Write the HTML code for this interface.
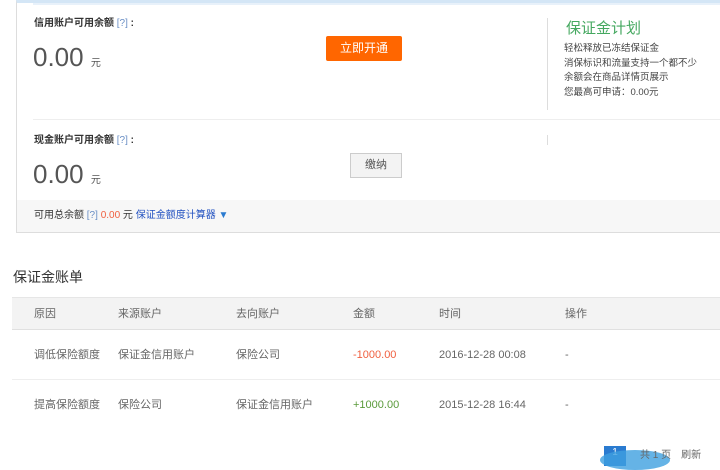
<!DOCTYPE html>
<html><head><meta charset="utf-8"><style>
*{margin:0;padding:0;box-sizing:border-box}
body{width:720px;height:460px;overflow:hidden;background:#fff;font-family:"Liberation Sans","Noto Sans CJK SC",sans-serif;color:#333;font-size:11px;position:relative}
.a{position:absolute;white-space:nowrap;line-height:14px}
.box{position:absolute;left:16px;top:0;width:720px;height:233px;border:1px solid #ddd;border-top:3px solid #d4e6f6}
.big{font-size:26px;color:#555;font-family:"Liberation Sans",sans-serif;line-height:1}
.q{color:#6a8fc5}
.g{color:#666}
</style></head><body>
<div class="box"></div>
<div class="a" style="left:33px;top:3px;width:690px;height:2px;background:#e8f1fa"></div>
<div class="a" style="left:33px;top:119px;width:690px;height:1px;background:#eee"></div>
<div class="a" style="left:17px;top:200px;width:703px;height:32px;background:#f7f7f7"></div>

<div class="a" style="left:34px;top:17px;font-weight:bold;font-size:10px">信用账户可用余额 <span class="q" style="font-weight:normal">[?]</span> :</div>
<div class="a big" style="left:33px;top:44px">0.00 <span style="font-size:10px">元</span></div>
<div class="a" style="left:326px;top:36px;width:76px;height:25px;background:#f60;color:#fff;font-size:12px;text-align:center;line-height:25px;border-radius:2px">立即开通</div>

<div class="a" style="left:547px;top:18px;width:1px;height:92px;background:#ddd"></div>
<div class="a" style="left:566px;top:20px;color:#45a860;font-size:15px;line-height:18px">保证金计划</div>
<div class="a" style="left:564px;top:42px;font-size:9.5px;line-height:14.5px;color:#444">轻松释放已冻结保证金<br>消保标识和流量支持一个都不少<br>余额会在商品详情页展示<br>您最高可申请：0.00元</div>
<div class="a" style="left:547px;top:135px;width:1px;height:10px;background:#ddd"></div>

<div class="a" style="left:34px;top:134px;font-weight:bold;font-size:10px">现金账户可用余额 <span class="q" style="font-weight:normal">[?]</span> :</div>
<div class="a big" style="left:33px;top:161px">0.00 <span style="font-size:10px">元</span></div>
<div class="a" style="left:350px;top:153px;width:52px;height:25px;background:#f3f3f3;border:1px solid #ccc;text-align:center;line-height:23px;font-size:11px;color:#555">缴纳</div>

<div class="a" style="left:34px;top:209px;font-size:10px">可用总余额 <span class="q">[?]</span> <span style="color:#f06040">0.00</span> 元 <span style="color:#2050c0">保证金额度计算器</span> <span style="color:#2a7bd0">▼</span></div>

<div class="a" style="left:13px;top:268px;font-size:14px;line-height:18px;color:#333">保证金账单</div>
<div class="a" style="left:12px;top:297px;width:710px;height:33px;background:#f3f3f3;border-top:1px solid #e6e6e6;border-bottom:1px solid #e0e0e0"></div>
<div class="a g" style="left:34px;top:307px">原因</div>
<div class="a g" style="left:118px;top:307px">来源账户</div>
<div class="a g" style="left:236px;top:307px">去向账户</div>
<div class="a g" style="left:353px;top:307px">金额</div>
<div class="a g" style="left:439px;top:307px">时间</div>
<div class="a g" style="left:565px;top:307px">操作</div>

<div class="a g" style="left:34px;top:348px">调低保险额度</div>
<div class="a g" style="left:118px;top:348px">保证金信用账户</div>
<div class="a g" style="left:236px;top:348px">保险公司</div>
<div class="a" style="left:353px;top:348px;color:#f06040">-1000.00</div>
<div class="a g" style="left:439px;top:348px">2016-12-28 00:08</div>
<div class="a g" style="left:565px;top:348px">-</div>
<div class="a" style="left:12px;top:379px;width:710px;height:1px;background:#eee"></div>
<div class="a g" style="left:34px;top:398px">提高保险额度</div>
<div class="a g" style="left:118px;top:398px">保险公司</div>
<div class="a g" style="left:236px;top:398px">保证金信用账户</div>
<div class="a" style="left:353px;top:398px;color:#5a9a3a">+1000.00</div>
<div class="a g" style="left:439px;top:398px">2015-12-28 16:44</div>
<div class="a g" style="left:565px;top:398px">-</div>

<div class="a" style="left:604px;top:446px;width:22px;height:20px;background:#2a7bd0;color:#fff;text-align:center;font-size:10px">1</div>
<div class="a" style="left:600px;top:450px;width:70px;height:20px;border-radius:50%;background:#3fa0e0;opacity:.8"></div>
<div class="a g" style="left:640px;top:449px;font-size:10px">共 1 页　刷新</div>
</body></html>
